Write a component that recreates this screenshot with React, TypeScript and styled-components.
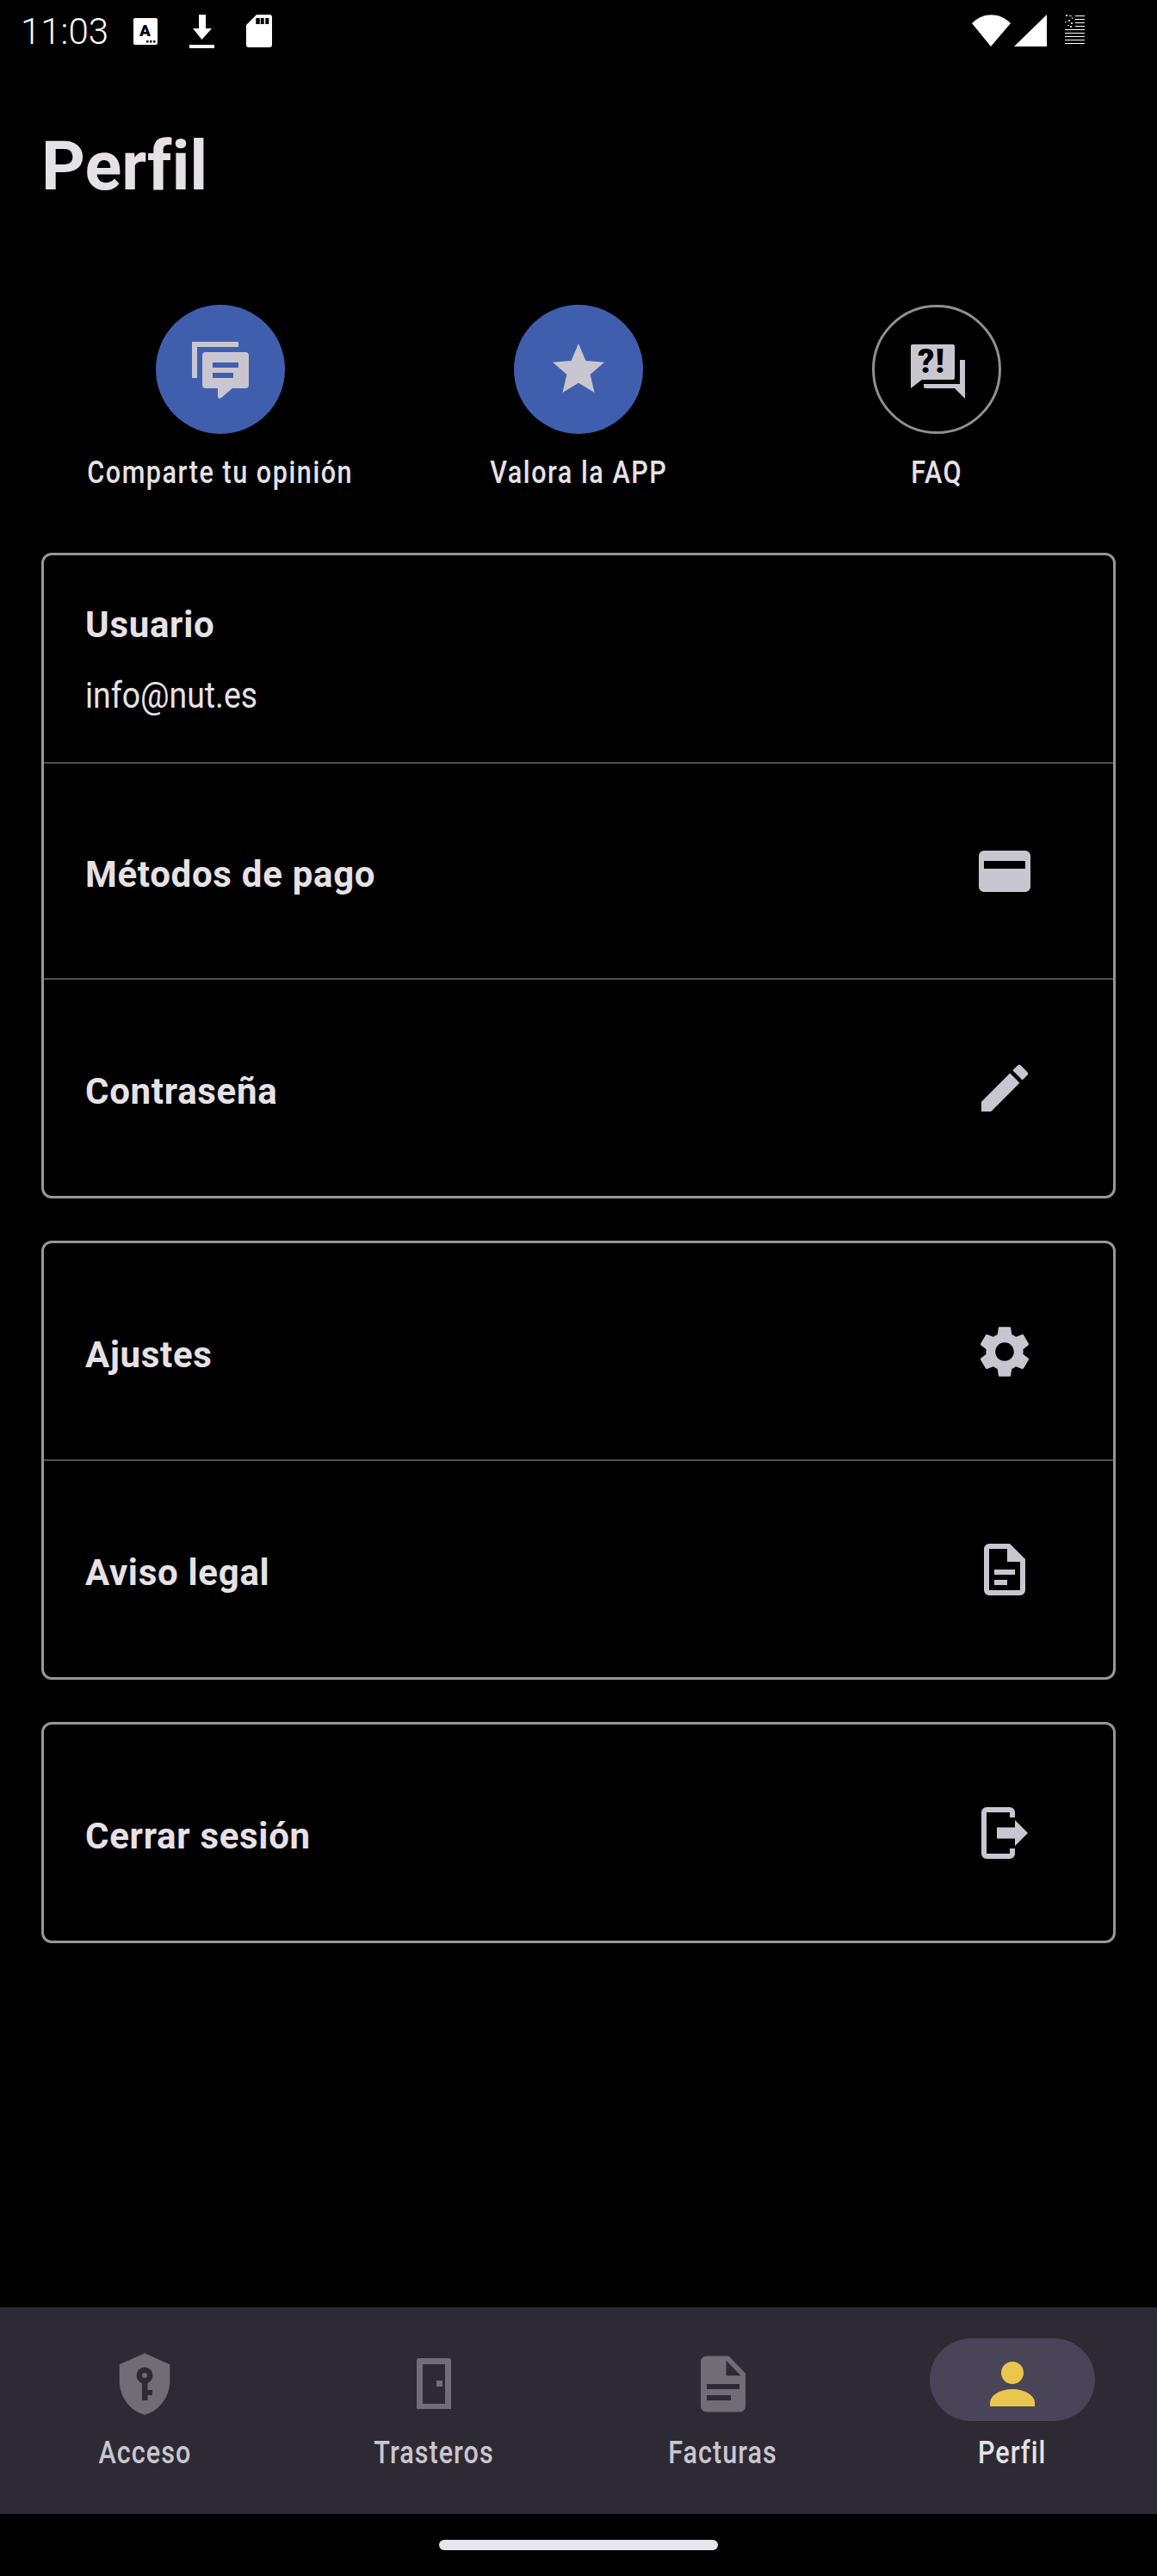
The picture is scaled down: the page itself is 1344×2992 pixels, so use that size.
import React from 'react'
import styled, { createGlobalStyle } from 'styled-components'
import { MdEdit, MdSettings, MdStar } from 'react-icons/md'

const GlobalStyle = createGlobalStyle`
  html, body {
    margin: 0;
    padding: 0;
    background: #000;
  }
  * {
    box-sizing: border-box;
  }
`

const BLUE = '#3f5fae'
const ICON = '#cac6d0'
const TEXT = '#e6e1e5'
const NAV = '#2d2a33'
const NAV_ICON = '#706d75'

const ChatIcon = () => (
  <svg width="72" height="72" viewBox="0 0 72 72" fill={ICON}>
    <path d="M3 4h54v6H9v36H3z" />
    <path
      fillRule="evenodd"
      d="M19 16h46a4 4 0 0 1 4 4v34a4 4 0 0 1-4 4H50L37 69c-2 1.500-4 1-4-2v-9H19a4 4 0 0 1-4-4V20a4 4 0 0 1 4-4zM27 28v6h30v-6zM27 40v6h24v-6z"
    />
  </svg>
)

const FaqIcon = () => (
  <svg width="72" height="72" viewBox="0 0 72 72" fill={ICON}>
    <path d="M8 7h47a2 2 0 0 1 2 2v37a2 2 0 0 1-2 2H19L6 58V9a2 2 0 0 1 2-2z" />
    <path d="M63 25h6v45L57 58H23a2 2 0 0 1-2-2v-3h42z" />
    <text x="30" y="40" textAnchor="middle" fontFamily="Roboto, sans-serif" fontSize="38" fontWeight="900" letterSpacing="1" fill="#000">?!</text>
  </svg>
)

const CardIcon = () => (
  <svg width="72" height="72" viewBox="0 0 72 72" fill={ICON}>
    <path
      fillRule="evenodd"
      d="M12 12h48a6 6 0 0 1 6 6v36a6 6 0 0 1-6 6H12a6 6 0 0 1-6-6V18a6 6 0 0 1 6-6zM12 24v9h48v-9z"
    />
  </svg>
)

const DocIcon = () => (
  <svg width="72" height="72" viewBox="0 0 24 24" fill={ICON}>
    <path d="M8 12h8v2H8zm0 4h5v2H8z" />
    <path
      fillRule="evenodd"
      d="M6 2h8l6 6v12a2 2 0 0 1-2 2H6a2 2 0 0 1-2-2V4a2 2 0 0 1 2-2zM6 4v16h12V9h-5V4z"
    />
  </svg>
)

const LogoutIcon = () => (
  <svg width="72" height="72" viewBox="0 0 24 24" fill={ICON}>
    <path d="M5 2h9a2 2 0 0 1 2 2v2h-2V4H5v16h9v-2h2v2a2 2 0 0 1-2 2H5a2 2 0 0 1-2-2V4a2 2 0 0 1 2-2z" />
    <path d="M9 9.800h7V7l5 5-5 5v-2.800H9z" />
  </svg>
)

const ShieldIcon = () => (
  <svg width="78" height="78" viewBox="0 0 78 78">
    <path
      transform="scale(3.25)"
      fill={NAV_ICON}
      d="M12 1L3 5v6c0 5.550 3.840 10.740 9 12 5.160-1.260 9-6.450 9-12V5l-9-4z"
    />
    <circle cx="39" cy="29" r="9.500" fill={NAV} />
    <path fill={NAV} d="M36 34h6.500v12h5.500v6h-5.500v6H36z" />
    <circle cx="39" cy="29" r="3" fill={NAV_ICON} />
  </svg>
)

const DoorIcon = () => (
  <svg width="78" height="78" viewBox="0 0 78 78" fill={NAV_ICON}>
    <path
      fillRule="evenodd"
      d="M22 9h34a3 3 0 0 1 3 3v56H19V12a3 3 0 0 1 3-3zM26 16v46h26V16z"
    />
    <path d="M42 35h7v7h-7z" />
  </svg>
)

const InvoiceIcon = () => (
  <svg width="78" height="78" viewBox="0 0 24 24" fill={NAV_ICON}>
    <path
      fillRule="evenodd"
      d="M6 2h8l6 6.200V20a2 2 0 0 1-2 2H6a2 2 0 0 1-2-2V4a2 2 0 0 1 2-2zM13.100 3.600V9h5.200zM6.150 12v1.850H17.850V12zM6.150 16v1.850H14.800V16z"
    />
  </svg>
)

const PersonIcon = () => (
  <svg width="78" height="78" viewBox="0 0 78 78" fill="#e9c74c">
    <ellipse cx="39" cy="26" rx="13" ry="13" />
    <path d="M13 65v-4c0-9 12-16 26-16s26 7 26 16v4z" />
  </svg>
)

const NoticeIcon = () => (
  <svg width="28" height="31" viewBox="0 0 28 31">
    <rect width="28" height="31" rx="2" fill="#fff" />
    <text x="13.500" y="21" textAnchor="middle" fontFamily="Roboto, sans-serif" fontWeight="900" fontSize="19" fill="#000">A</text>
    <path d="M15 26h2.500v2.500H15zM19 26h2.500v2.500H19zM23 26h2.500v2.500H23z" fill="#000" />
  </svg>
)

const DownloadIcon = () => (
  <svg width="29" height="39" viewBox="0 0 29 39" fill="#fff">
    <path d="M11 0h8v16h7L14.500 29 4 16h7zM0 35h29v4H0z" />
  </svg>
)

const SdIcon = () => (
  <svg width="30" height="38" viewBox="0 0 30 38">
    <path
      fill="#fff"
      fillRule="evenodd"
      d="M12 0h15a3 3 0 0 1 3 3v32a3 3 0 0 1-3 3H3a3 3 0 0 1-3-3V12zM11.300 4v7h4.400V4zM16.700 4v7h4V4zM22.300 4v7h4V4z"
    />
  </svg>
)

const SignalIcon = () => (
  <svg width="87" height="38" viewBox="0 0 87 38" fill="#fff">
    <path d="M22 37L0 10C13-3 32-3 45 10z" />
    <path d="M87 0v37H49z" />
  </svg>
)

const BatteryIcon = () => (
  <svg width="23" height="38" viewBox="0 0 23 38" fill="#fff">
    <path d="M12 1h11v1H12zM12 5h11v1H12zM12 9h11v1H12zM12 13h11v1H12z" />
    <path d="M0 17h23v1H0zM0 21h23v1H0zM0 25h23v1H0zM0 29h23v1H0zM0 33h23v1H0z" />
    <path d="M1 0h2v2H1zM5 1h3v1H5zM8 3h1v2H8zM4 6h2v2H4zM0 8h2v1H0zM7 9h2v2H7zM3 12h2v1H3zM6 13h2v2H6z" opacity="0.8" />
  </svg>
)

const actions = [
  { label: 'Comparte tu opinión', icon: <ChatIcon />, filled: true },
  { label: 'Valora la APP', icon: <MdStar size={72} color={ICON} />, filled: true },
  { label: 'FAQ', icon: <FaqIcon />, filled: false },
]

const tabs = [
  { label: 'Acceso', icon: <ShieldIcon />, active: false },
  { label: 'Trasteros', icon: <DoorIcon />, active: false },
  { label: 'Facturas', icon: <InvoiceIcon />, active: false },
  { label: 'Perfil', icon: <PersonIcon />, active: true },
]

const App: React.FC = () => {
  return (
    <Screen>
      <GlobalStyle />
      <StatusBar>
        <Clock>11:03</Clock>
        <StatusLeft>
          <NoticeIcon />
          <DownloadIcon />
          <SdIcon />
        </StatusLeft>
        <StatusRight>
          <SignalIcon />
          <BatteryIcon />
        </StatusRight>
      </StatusBar>

      <Title>Perfil</Title>

      <Actions>
        {actions.map((action) => (
          <Action key={action.label}>
            <ActionCircle $filled={action.filled}>{action.icon}</ActionCircle>
            <ActionLabel>{action.label}</ActionLabel>
          </Action>
        ))}
      </Actions>

      <Cards>
        <Card>
          <UserRow>
            <RowTitle>Usuario</RowTitle>
            <UserEmail>info@nut.es</UserEmail>
          </UserRow>
          <Row>
            <RowTitle>Métodos de pago</RowTitle>
            <CardIcon />
          </Row>
          <Row>
            <RowTitle>Contraseña</RowTitle>
            <MdEdit size={72} color={ICON} />
          </Row>
        </Card>
        <Card>
          <Row>
            <RowTitle>Ajustes</RowTitle>
            <MdSettings size={72} color={ICON} />
          </Row>
          <Row>
            <RowTitle>Aviso legal</RowTitle>
            <DocIcon />
          </Row>
        </Card>
        <Card>
          <Row>
            <RowTitle>Cerrar sesión</RowTitle>
            <LogoutIcon />
          </Row>
        </Card>
      </Cards>

      <BottomNav>
        {tabs.map((tab) => (
          <Tab key={tab.label}>
            <TabIcon $active={tab.active}>{tab.icon}</TabIcon>
            <TabLabel $active={tab.active}>{tab.label}</TabLabel>
          </Tab>
        ))}
      </BottomNav>
      <GestureArea>
        <GestureBar />
      </GestureArea>
    </Screen>
  )
}

const Screen = styled.div`
  display: flex;
  flex-direction: column;
  width: 1344px;
  height: 2992px;
  overflow: hidden;
  background: #000;
  color: ${TEXT};
  font-family: Roboto, 'Liberation Sans', sans-serif;
`

const StatusBar = styled.div`
  display: flex;
  align-items: center;
  height: 72px;
  padding: 0 84px 0 24px;
  color: #fff;
`

const Clock = styled.span`
  width: 131px;
  padding-top: 2px;
  font-size: 42px;
  line-height: 72px;
  font-weight: 300;
`

const StatusLeft = styled.div`
  display: flex;
  align-items: center;
  gap: 37px;
`

const StatusRight = styled.div`
  display: flex;
  align-items: center;
  gap: 21px;
  margin-left: auto;
`

const Title = styled.h1`
  margin: 74px 0 0 48px;
  height: 94px;
  font-size: 80px;
  line-height: 94px;
  font-weight: 700;
  color: ${TEXT};
  font-variant-ligatures: none;
  transform: scaleX(0.99);
  transform-origin: left center;
`

const Actions = styled.div`
  display: grid;
  grid-template-columns: repeat(3, 1fr);
  margin: 114px 48px 0;
`

const Action = styled.div`
  display: flex;
  flex-direction: column;
  align-items: center;
  gap: 23px;
`

const ActionCircle = styled.div<{ $filled: boolean }>`
  display: flex;
  align-items: center;
  justify-content: center;
  width: 150px;
  height: 150px;
  border-radius: 50%;
  background: ${(p) => (p.$filled ? BLUE : 'transparent')};
  border: ${(p) => (p.$filled ? 'none' : '3px solid #8f8f8f')};
`

const ActionLabel = styled.span`
  display: inline-block;
  font-size: 36px;
  line-height: 44px;
  font-weight: 500;
  letter-spacing: 1.8px;
  white-space: nowrap;
  color: ${TEXT};
  transform: scaleX(0.85);
`

const Cards = styled.div`
  display: flex;
  flex-direction: column;
  gap: 49px;
  margin: 71px 48px 0;
`

const Card = styled.div`
  border: 3px solid #969696;
  border-radius: 12px;
`

const Row = styled.div`
  display: flex;
  align-items: center;
  justify-content: space-between;
  height: 251px;
  padding: 0 90px 0 48px;
  & + & {
    height: 253px;
    border-top: 2px solid #4f4f4f;
  }
`

const UserRow = styled.div`
  display: flex;
  flex-direction: column;
  justify-content: center;
  gap: 32px;
  height: 240px;
  padding: 0 48px 4px;
  & + ${Row} {
    border-top: 2px solid #4f4f4f;
  }
`

const RowTitle = styled.span`
  padding-top: 8px;
  font-size: 42px;
  line-height: 50px;
  font-weight: 700;
  letter-spacing: 0.7px;
  color: ${TEXT};
`

const UserEmail = styled.span`
  font-size: 42px;
  line-height: 50px;
  font-weight: 400;
  color: ${TEXT};
  transform: scaleX(0.89);
  transform-origin: left center;
`

const BottomNav = styled.nav`
  display: grid;
  grid-template-columns: repeat(4, 1fr);
  height: 240px;
  margin-top: auto;
  padding-top: 36px;
  background: ${NAV};
`

const Tab = styled.div`
  display: flex;
  flex-direction: column;
  align-items: center;
  gap: 15px;
`

const TabIcon = styled.div<{ $active: boolean }>`
  display: flex;
  align-items: center;
  justify-content: center;
  width: 192px;
  height: 96px;
  padding-top: 10px;
  border-radius: 48px;
  background: ${(p) => (p.$active ? '#4a4458' : 'transparent')};
`

const TabLabel = styled.span<{ $active: boolean }>`
  display: inline-block;
  font-size: 36px;
  line-height: 44px;
  font-weight: 500;
  letter-spacing: 1.2px;
  white-space: nowrap;
  color: ${(p) => (p.$active ? TEXT : ICON)};
  transform: scaleX(0.85);
`

const GestureArea = styled.div`
  display: flex;
  justify-content: center;
  height: 72px;
  padding-top: 30px;
`

const GestureBar = styled.div`
  width: 324px;
  height: 12px;
  border-radius: 6px;
  background: #e8e6ea;
`

export default App
